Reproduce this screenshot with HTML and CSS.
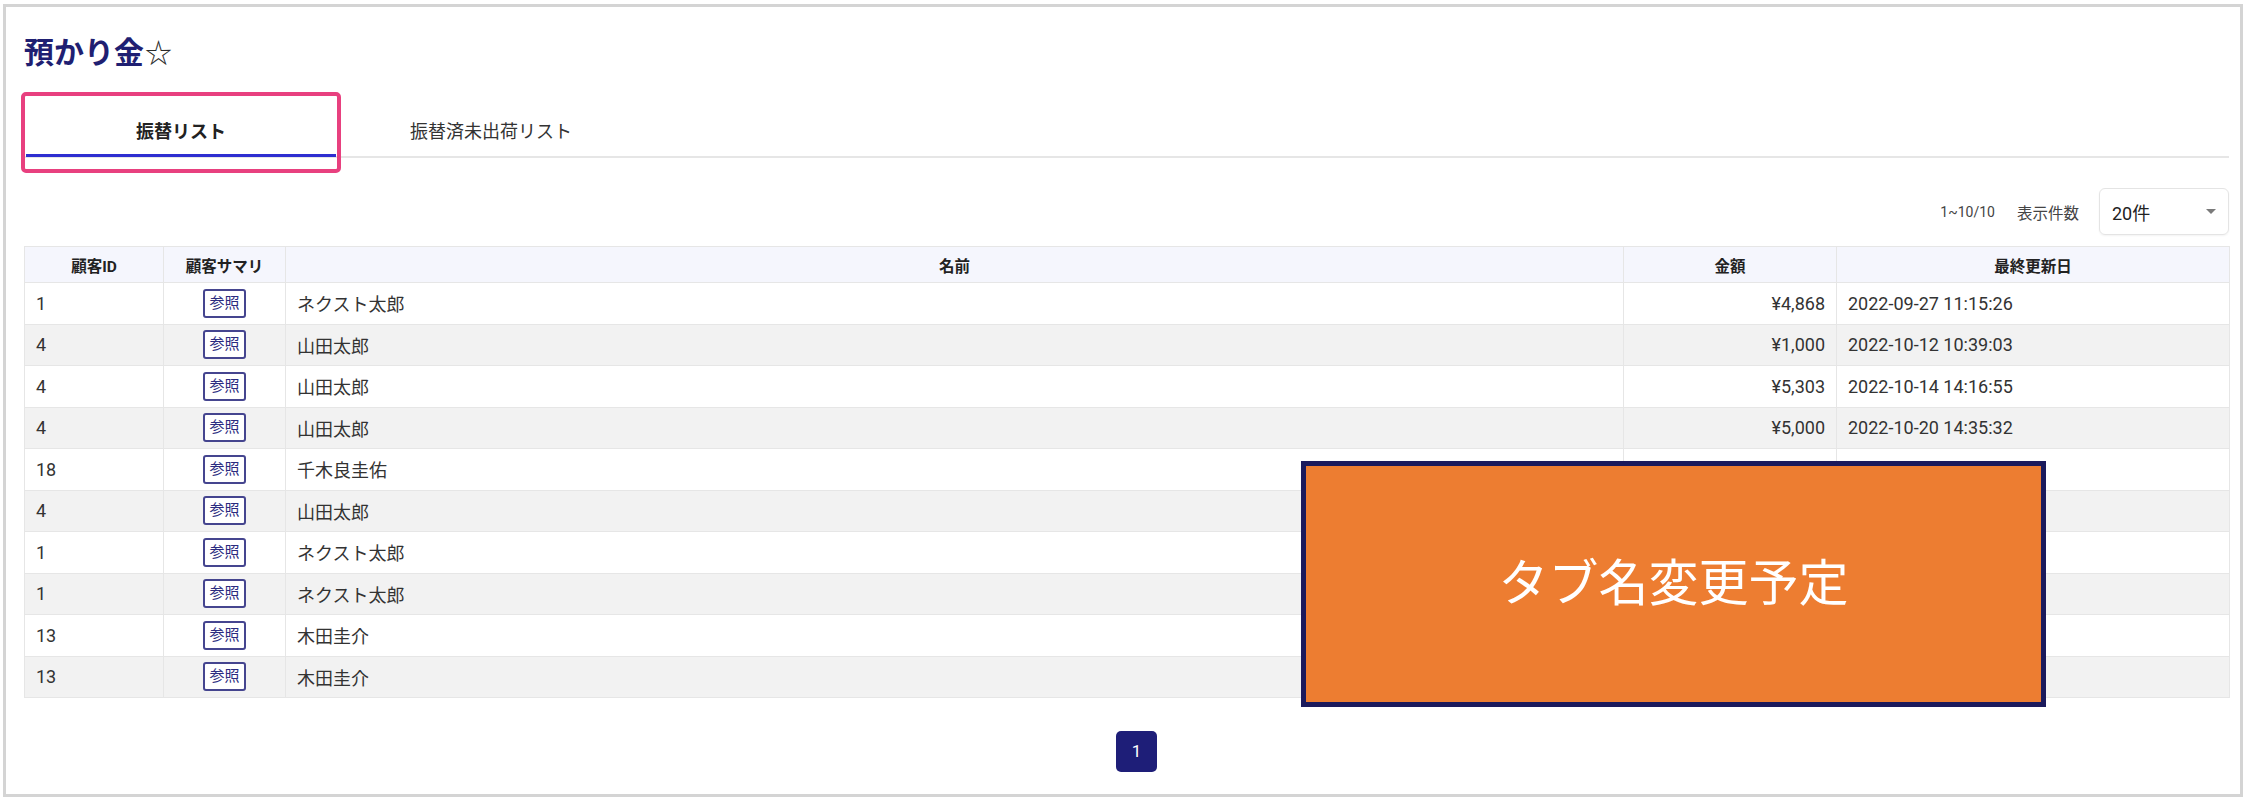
FILE: index.html
```html
<!DOCTYPE html>
<html lang="ja">
<head>
<meta charset="utf-8">
<title>預かり金</title>
<link rel="stylesheet" href="styles.css">
</head>
<body>
<div class="frame">
  <h1 class="title">預かり金<span class="star">☆</span></h1>
  <div class="tabs">
    <div class="tab active">振替リスト</div>
    <div class="tab">振替済未出荷リスト</div>
  </div>
  <div class="toolbar">
    <span class="count">1~10/10</span>
    <span class="label">表示件数</span>
    <div class="select"><span>20件</span><span class="caret"></span></div>
  </div>
  <table class="grid">
    <colgroup>
      <col class="c-id"><col class="c-sum"><col class="c-name"><col class="c-amt"><col class="c-date">
    </colgroup>
    <thead>
      <tr><th>顧客ID</th><th>顧客サマリ</th><th>名前</th><th>金額</th><th>最終更新日</th></tr>
    </thead>
    <tbody>
      <tr><td>1</td><td class="ctr"><span class="ref">参照</span></td><td>ネクスト太郎</td><td class="num">¥4,868</td><td>2022-09-27 11:15:26</td></tr>
      <tr><td>4</td><td class="ctr"><span class="ref">参照</span></td><td>山田太郎</td><td class="num">¥1,000</td><td>2022-10-12 10:39:03</td></tr>
      <tr><td>4</td><td class="ctr"><span class="ref">参照</span></td><td>山田太郎</td><td class="num">¥5,303</td><td>2022-10-14 14:16:55</td></tr>
      <tr><td>4</td><td class="ctr"><span class="ref">参照</span></td><td>山田太郎</td><td class="num">¥5,000</td><td>2022-10-20 14:35:32</td></tr>
      <tr><td>18</td><td class="ctr"><span class="ref">参照</span></td><td>千木良圭佑</td><td class="num"></td><td></td></tr>
      <tr><td>4</td><td class="ctr"><span class="ref">参照</span></td><td>山田太郎</td><td class="num"></td><td></td></tr>
      <tr><td>1</td><td class="ctr"><span class="ref">参照</span></td><td>ネクスト太郎</td><td class="num"></td><td></td></tr>
      <tr><td>1</td><td class="ctr"><span class="ref">参照</span></td><td>ネクスト太郎</td><td class="num"></td><td></td></tr>
      <tr><td>13</td><td class="ctr"><span class="ref">参照</span></td><td>木田圭介</td><td class="num"></td><td></td></tr>
      <tr><td>13</td><td class="ctr"><span class="ref">参照</span></td><td>木田圭介</td><td class="num"></td><td></td></tr>
    </tbody>
  </table>
  <div class="pager"><span class="page">1</span></div>

  <div class="highlight"></div>
  <div class="note">タブ名変更予定</div>
</div>
</body>
</html>
```

FILE: styles.css
```css
html, body {
  margin: 0;
  padding: 0;
  background: #ffffff;
}
body {
  font-family: Roboto, "Noto Sans CJK JP", sans-serif;
  color: #333333;
}
.frame {
  position: relative;
  box-sizing: border-box;
  margin: 4px 0 0 3px;
  width: 2240px;
  height: 793px;
  border: 3px solid #d4d4d4;
  padding: 0 11px 0 18px;
}
.title {
  margin: 28px 0 0 0;
  height: 36px;
  line-height: 36px;
  font-size: 30px;
  font-weight: 700;
  color: #1f1f72;
  letter-spacing: 0;
}
.star {
  font-weight: 400;
  font-size: 27px;
  color: #2a2a2a;
  margin-left: 1px;
}
.tabs {
  display: flex;
  margin-top: 37px;
  padding-left: 2px;
  border-bottom: 2px solid #e6e6e6;
  height: 48px;
}
.tab {
  width: 310px;
  height: 48px;
  line-height: 48px;
  text-align: center;
  font-size: 18px;
  color: #333333;
  box-sizing: border-box;
}
.tab.active {
  font-weight: 700;
  color: #222222;
  border-bottom: 3px solid #2e2ed0;
  height: 49px;
  line-height: 48px;
}
.toolbar {
  display: flex;
  justify-content: flex-end;
  align-items: center;
  margin-top: 30px;
  height: 47px;
}
.count {
  font-size: 14px;
  color: #444444;
}
.label {
  font-size: 15.5px;
  color: #444444;
  margin-left: 22px;
}
.select {
  margin-left: 20px;
  width: 130px;
  height: 47px;
  box-sizing: border-box;
  border: 1px solid #e4e4e4;
  border-radius: 6px;
  box-shadow: 0 1px 2px rgba(0, 0, 0, 0.05);
  display: flex;
  align-items: center;
  justify-content: space-between;
  padding: 0 12px 0 12px;
  font-size: 18px;
  color: #222222;
}
.caret {
  width: 0;
  height: 0;
  border-left: 5px solid transparent;
  border-right: 5px solid transparent;
  border-top: 5px solid #7a7a7a;
}
.grid {
  margin-top: 11px;
  width: 2205px;
  border-collapse: collapse;
  table-layout: fixed;
  font-size: 18px;
}
.c-id { width: 139px; }
.c-sum { width: 122px; }
.c-name { width: 1338px; }
.c-amt { width: 213px; }
.c-date { width: 393px; }
.grid th, .grid td {
  border: 1px solid #e6e6e6;
  padding: 0 11px;
  box-sizing: border-box;
}
.grid th {
  height: 36px;
  background: #f5f6fd;
  font-size: 15.5px;
  font-weight: 700;
  color: #222222;
  text-align: center;
}
.grid td {
  height: 41.5px;
  color: #333333;
}
.grid tbody tr:nth-child(even) td {
  background: #f2f2f2;
}
.grid tbody tr:nth-child(odd) td {
  background: #ffffff;
}
.grid td.ctr {
  text-align: center;
  padding: 0;
}
.grid td.num {
  text-align: right;
  padding-right: 11px;
}
.ref {
  display: inline-block;
  box-sizing: border-box;
  width: 43px;
  height: 29px;
  line-height: 25px;
  border: 2px solid #45458f;
  border-radius: 3px;
  background: #ffffff;
  color: #2b2b80;
  font-size: 15px;
  text-align: center;
  vertical-align: middle;
}
.pager {
  display: flex;
  justify-content: center;
  margin-top: 33px;
  padding-left: 20px;
}
.page {
  width: 41px;
  height: 41px;
  line-height: 41px;
  border-radius: 5px;
  background: #1e1e78;
  color: #ffffff;
  text-align: center;
  font-size: 17px;
}
.highlight {
  position: absolute;
  left: 15px;
  top: 85px;
  width: 320px;
  height: 81px;
  box-sizing: border-box;
  border: 4.5px solid #e8407f;
  border-radius: 5px;
}
.note {
  position: absolute;
  left: 1295px;
  top: 454px;
  width: 745px;
  height: 246px;
  box-sizing: border-box;
  border: 5px solid #1b1a5c;
  background: #ed7d31;
  color: #ffffff;
  font-family: "Noto Sans CJK JP", sans-serif;
  font-size: 50px;
  font-weight: 400;
  display: flex;
  align-items: center;
  justify-content: center;
  padding-bottom: 10px;
}
```
